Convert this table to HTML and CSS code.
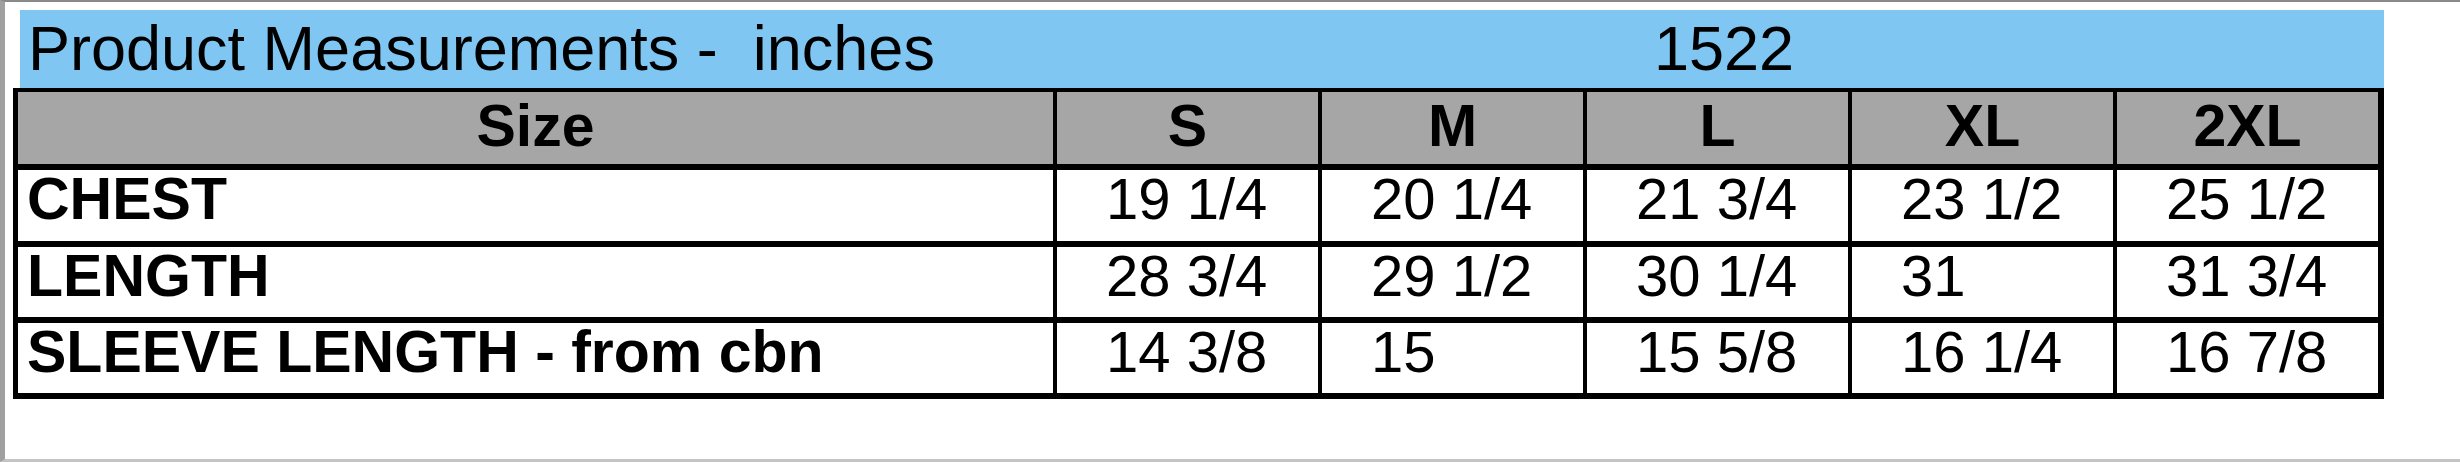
FILE: index.html
```html
<!DOCTYPE html>
<html lang="en">
<head>
<meta charset="utf-8">
<title>Product Measurements - 1522</title>
<link rel="stylesheet" href="styles.css">
</head>
<body>
<div class="frame">
  <div class="sheet">
    <div class="title-bar">
      <span class="title-label">Product Measurements -&nbsp; inches</span>
      <span class="title-code">1522</span>
    </div>
    <div class="grid">
      <div class="cell head">Size</div>
      <div class="cell head">S</div>
      <div class="cell head">M</div>
      <div class="cell head">L</div>
      <div class="cell head">XL</div>
      <div class="cell head">2XL</div>

      <div class="cell label">CHEST</div>
      <div class="cell value">19 1/4</div>
      <div class="cell value">20 1/4</div>
      <div class="cell value">21 3/4</div>
      <div class="cell value">23 1/2</div>
      <div class="cell value">25 1/2</div>

      <div class="cell label">LENGTH</div>
      <div class="cell value">28 3/4</div>
      <div class="cell value">29 1/2</div>
      <div class="cell value">30 1/4</div>
      <div class="cell value">31</div>
      <div class="cell value">31 3/4</div>

      <div class="cell label">SLEEVE LENGTH - from cbn</div>
      <div class="cell value">14 3/8</div>
      <div class="cell value">15</div>
      <div class="cell value">15 5/8</div>
      <div class="cell value">16 1/4</div>
      <div class="cell value">16 7/8</div>
    </div>
  </div>
</div>
</body>
</html>
```
FILE: styles.css
```css
html, body {
  margin: 0;
  padding: 0;
  background: #ffffff;
}

body {
  font-family: "Liberation Sans", Arial, Helvetica, sans-serif;
  color: #000000;
}

.frame {
  box-sizing: border-box;
  width: 2460px;
  height: 462px;
  border-top: 2px solid #8a8a8a;
  border-left: 5px solid #a0a0a0;
  border-bottom: 3px solid #c4c4c4;
  padding: 8px 0 0 8px;
}

.sheet {
  width: 2371px;
}

.title-bar {
  margin-left: 7px;
  height: 78px;
  background: #7fc6f2;
  display: grid;
  grid-template-columns: 1626px auto;
  padding-left: 8px;
  padding-top: 7px;
  box-sizing: border-box;
  font-size: 63px;
  line-height: 63px;
  white-space: nowrap;
}

.grid {
  display: grid;
  grid-template-columns: 1035px repeat(5, 261px);
  grid-template-rows: 72px 71px 70px 70px;
  column-gap: 4px;
  row-gap: 6px;
  background: #000000;
  padding: 4px 6px 6px 5px;
}

.cell {
  background: #ffffff;
  white-space: nowrap;
}

.head {
  background: #a6a6a6;
  font-weight: bold;
  font-size: 59px;
  line-height: 59px;
  text-align: center;
  padding-top: 5px;
}

.label {
  font-weight: bold;
  font-size: 59px;
  line-height: 59px;
  padding-left: 9px;
}

.value {
  font-size: 58px;
  line-height: 58px;
  padding-left: 49px;
}
```
